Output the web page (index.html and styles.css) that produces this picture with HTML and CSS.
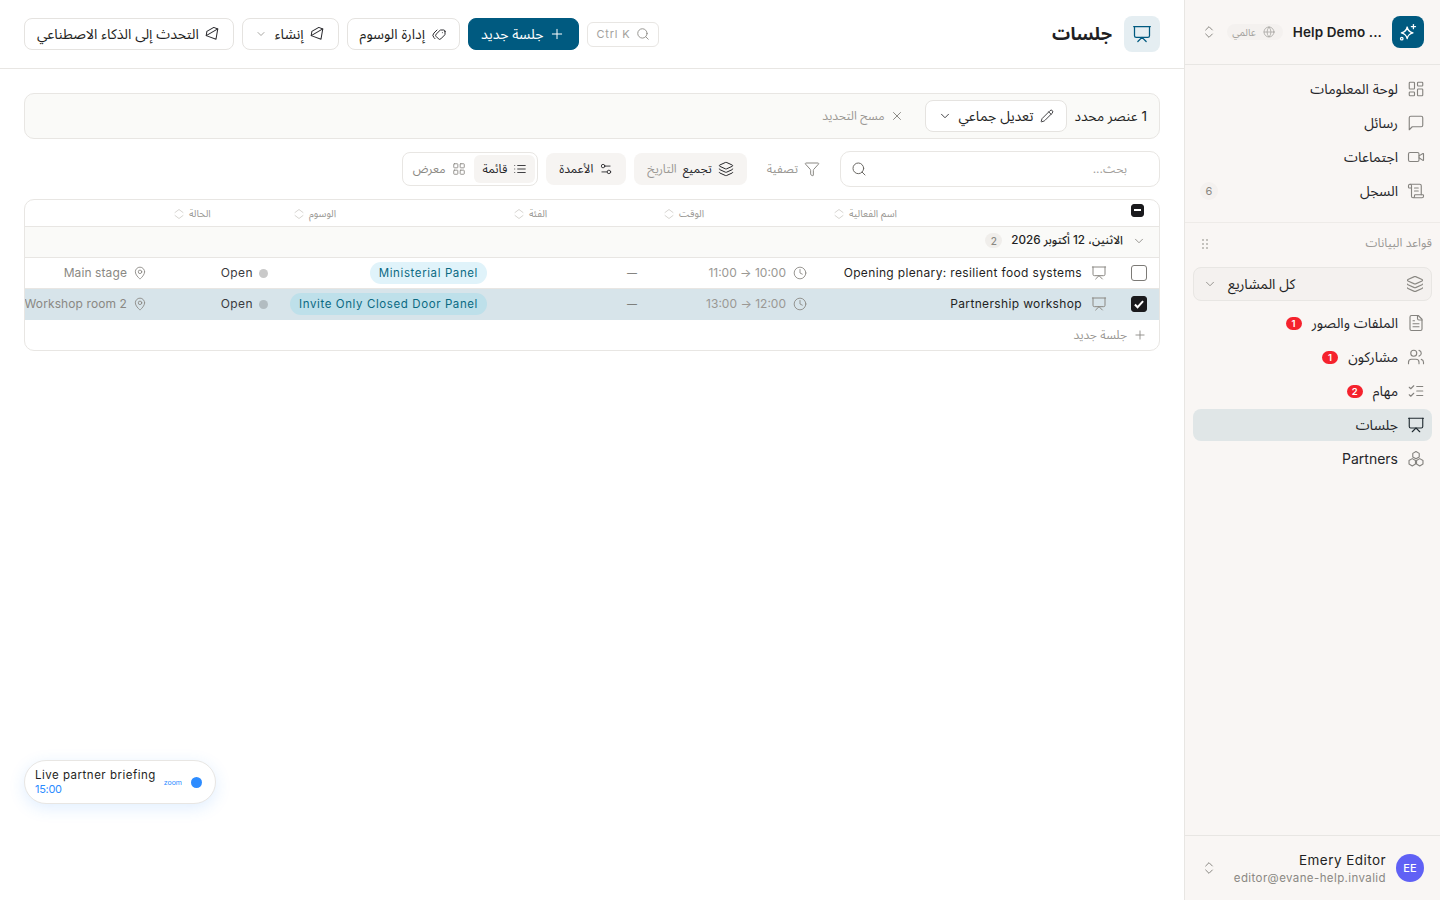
FILE: index.html
```html
<!DOCTYPE html>
<html lang="ar" dir="rtl">
<head>
<meta charset="UTF-8">
<title>جلسات</title>
<link rel="stylesheet" href="styles.css">
</head>
<body>
<svg class="sprite" xmlns="http://www.w3.org/2000/svg">
  <symbol id="i-present" viewBox="0 0 24 24"><path d="M2 3h20"/><path d="M21 3v11a2 2 0 0 1-2 2H5a2 2 0 0 1-2-2V3"/><path d="m7 21 5-5 5 5"/></symbol>
  <symbol id="i-dash" viewBox="0 0 24 24"><rect x="3" y="3" width="7" height="9" rx="1"/><rect x="14" y="3" width="7" height="5" rx="1"/><rect x="14" y="12" width="7" height="9" rx="1"/><rect x="3" y="16" width="7" height="5" rx="1"/></symbol>
  <symbol id="i-msg" viewBox="0 0 24 24"><path d="M21 15a2 2 0 0 1-2 2H7l-4 4V5a2 2 0 0 1 2-2h14a2 2 0 0 1 2 2z"/></symbol>
  <symbol id="i-video" viewBox="0 0 24 24"><path d="m16 13 5.223 3.482a.5.5 0 0 0 .777-.416V7.870a.5.5 0 0 0-.752-.432L16 10.500"/><rect x="2" y="6" width="14" height="12" rx="2"/></symbol>
  <symbol id="i-scroll" viewBox="0 0 24 24"><path d="M15 12h-5"/><path d="M15 8h-5"/><path d="M19 17V5a2 2 0 0 0-2-2H4"/><path d="M8 21h12a2 2 0 0 0 2-2v-1a1 1 0 0 0-1-1H11a1 1 0 0 0-1 1v1a2 2 0 1 1-4 0V5a2 2 0 1 0-4 0v2a1 1 0 0 0 1 1h3"/></symbol>
  <symbol id="i-layers" viewBox="0 0 24 24"><path d="M12.830 2.180a2 2 0 0 0-1.660 0L2.600 6.080a1 1 0 0 0 0 1.830l8.580 3.910a2 2 0 0 0 1.660 0l8.580-3.900a1 1 0 0 0 0-1.830z"/><path d="M2 12a1 1 0 0 0 .58.91l8.600 3.910a2 2 0 0 0 1.650 0l8.580-3.900A1 1 0 0 0 22 12"/><path d="M2 17a1 1 0 0 0 .58.91l8.600 3.910a2 2 0 0 0 1.650 0l8.580-3.900A1 1 0 0 0 22 17"/></symbol>
  <symbol id="i-file" viewBox="0 0 24 24"><path d="M15 2H6a2 2 0 0 0-2 2v16a2 2 0 0 0 2 2h12a2 2 0 0 0 2-2V7Z"/><path d="M14 2v4a2 2 0 0 0 2 2h4"/><path d="M10 9H8"/><path d="M16 13H8"/><path d="M16 17H8"/></symbol>
  <symbol id="i-users" viewBox="0 0 24 24"><path d="M16 21v-2a4 4 0 0 0-4-4H6a4 4 0 0 0-4 4v2"/><circle cx="9" cy="7" r="4"/><path d="M22 21v-2a4 4 0 0 0-3-3.870"/><path d="M16 3.130a4 4 0 0 1 0 7.750"/></symbol>
  <symbol id="i-checks" viewBox="0 0 24 24"><path d="m3 17 2 2 4-4"/><path d="m3 7 2 2 4-4"/><path d="M13 6h8"/><path d="M13 12h8"/><path d="M13 18h8"/></symbol>
  <symbol id="i-hex" viewBox="0 0 24 24"><path d="M12 2l4.300 2.500v4.800L12 11.800 7.700 9.300V4.500z"/><path d="M7 11.500l4.300 2.500v4.800L7 21.300l-4.300-2.500V14z"/><path d="M17 11.500l4.300 2.500v4.800L17 21.300l-4.300-2.500V14z"/></symbol>
  <symbol id="i-updown" viewBox="0 0 24 24"><path d="m7 15 5 5 5-5"/><path d="m7 9 5-5 5 5"/></symbol>
  <symbol id="i-sort" viewBox="0 0 24 24"><path d="M4 15l8 6 8-6"/><path d="M4 9l8-6 8 6"/></symbol>
  <symbol id="i-globe" viewBox="0 0 24 24"><circle cx="12" cy="12" r="10"/><path d="M12 2a14.500 14.500 0 0 0 0 20 14.500 14.500 0 0 0 0-20"/><path d="M2 12h20"/></symbol>
  <symbol id="i-spark" viewBox="0 0 24 24"><path d="M11 6c.9 4.400 2.400 6 7 7-4.600 1-6.100 2.600-7 7-.9-4.400-2.400-6-7-7 4.600-1 6.100-2.600 7-7z"/><path d="M18.500 3v5"/><path d="M16 5.500h5"/><circle cx="4.500" cy="20" r="1.500"/></symbol>
  <symbol id="i-down" viewBox="0 0 24 24"><path d="m6 9 6 6 6-6"/></symbol>
  <symbol id="i-search" viewBox="0 0 24 24"><circle cx="11" cy="11" r="8"/><path d="m21 21-4.300-4.300"/></symbol>
  <symbol id="i-plus" viewBox="0 0 24 24"><path d="M5 12h14"/><path d="M12 5v14"/></symbol>
  <symbol id="i-tags" viewBox="0 0 24 24"><path d="M3 8v4.172a2 2 0 0 0 .586 1.414l5.710 5.710a2.410 2.410 0 0 0 3.408 0l3.592-3.592a2.410 2.410 0 0 0 0-3.408l-5.710-5.710a2 2 0 0 0-1.414-.586H5a2 2 0 0 0-2 2z"/><path d="M18 19l1.592-1.592a4.820 4.820 0 0 0 0-6.816L15 6"/><path d="M7 10h-.01"/></symbol>
  <symbol id="i-gem" viewBox="0 0 24 24"><g transform="rotate(-30 12 12)"><path d="M6 4h12l4 5-10 12L2 9Z"/><path d="M2 9h20"/></g></symbol>
  <symbol id="i-pencil" viewBox="0 0 24 24"><path d="M21.174 6.812a1 1 0 0 0-3.986-3.987L3.842 16.174a2 2 0 0 0-.5.830l-1.321 4.352a.5.5 0 0 0 .623.622l4.353-1.320a2 2 0 0 0 .830-.497z"/><path d="m15 5 4 4"/></symbol>
  <symbol id="i-x" viewBox="0 0 24 24"><path d="M18 6 6 18"/><path d="m6 6 12 12"/></symbol>
  <symbol id="i-funnel" viewBox="0 0 24 24"><path d="M10 20a1 1 0 0 0 .553.895l2 1A1 1 0 0 0 14 21v-7a2 2 0 0 1 .517-1.341L21.740 4.670A1 1 0 0 0 21 3H3a1 1 0 0 0-.742 1.670l7.225 7.989A2 2 0 0 1 10 14z"/></symbol>
  <symbol id="i-cols" viewBox="0 0 24 24"><path d="M14 17H5"/><path d="M19 7h-9"/><circle cx="17" cy="17" r="3"/><circle cx="7" cy="7" r="3"/></symbol>
  <symbol id="i-list" viewBox="0 0 24 24"><path d="M3 12h.01"/><path d="M3 18h.01"/><path d="M3 6h.01"/><path d="M8 12h13"/><path d="M8 18h13"/><path d="M8 6h13"/></symbol>
  <symbol id="i-grid" viewBox="0 0 24 24"><rect x="3" y="3" width="7" height="7" rx="1"/><rect x="14" y="3" width="7" height="7" rx="1"/><rect x="14" y="14" width="7" height="7" rx="1"/><rect x="3" y="14" width="7" height="7" rx="1"/></symbol>
  <symbol id="i-clock" viewBox="0 0 24 24"><circle cx="12" cy="12" r="10"/><polyline points="12 6 12 12 16 14"/></symbol>
  <symbol id="i-pin" viewBox="0 0 24 24"><path d="M20 10c0 4.993-5.539 10.193-7.399 11.799a1 1 0 0 1-1.202 0C9.539 20.193 4 14.993 4 10a8 8 0 0 1 16 0"/><circle cx="12" cy="10" r="3"/></symbol>
</svg>

<div class="app">
  <aside class="sidebar">
    <div class="workspace">
      <span class="logo"><svg class="ic ic-20"><use href="#i-spark"/></svg></span>
      <b class="ws-name" dir="ltr">Help Demo ...</b>
      <span class="ws-tag"><svg class="ic ic-12"><use href="#i-globe"/></svg>عالمي</span>
      <svg class="ic ic-16 updown"><use href="#i-updown"/></svg>
    </div>
    <nav class="nav nav-top">
      <a class="nav-item"><svg class="ic"><use href="#i-dash"/></svg>لوحة المعلومات</a>
      <a class="nav-item"><svg class="ic"><use href="#i-msg"/></svg>رسائل</a>
      <a class="nav-item"><svg class="ic"><use href="#i-video"/></svg>اجتماعات</a>
      <a class="nav-item"><svg class="ic"><use href="#i-scroll"/></svg>السجل<span class="count">6</span></a>
    </nav>
    <div class="section-head">
      <span>قواعد البيانات</span>
      <span class="grip"><i></i><i></i><i></i><i></i><i></i><i></i></span>
    </div>
    <div class="project-select">
      <svg class="ic ic-18"><use href="#i-layers"/></svg>
      <span class="project-name">كل المشاريع</span>
      <svg class="ic ic-14"><use href="#i-down"/></svg>
    </div>
    <nav class="nav">
      <a class="nav-item"><svg class="ic"><use href="#i-file"/></svg>الملفات والصور<span class="badge">1</span></a>
      <a class="nav-item"><svg class="ic"><use href="#i-users"/></svg>مشاركون<span class="badge">1</span></a>
      <a class="nav-item"><svg class="ic"><use href="#i-checks"/></svg>مهام<span class="badge">2</span></a>
      <a class="nav-item active"><svg class="ic"><use href="#i-present"/></svg>جلسات</a>
      <a class="nav-item"><svg class="ic"><use href="#i-hex"/></svg><span class="txt">Partners</span></a>
    </nav>
    <div class="user">
      <span class="avatar">EE</span>
      <div class="user-info">
        <b>Emery Editor</b>
        <small>editor@evane-help.invalid</small>
      </div>
      <svg class="ic ic-16 updown"><use href="#i-updown"/></svg>
    </div>
  </aside>

  <main class="main">
    <header class="topbar">
      <div class="title">
        <span class="title-icon"><svg class="ic ic-20"><use href="#i-present"/></svg></span>
        <h1>جلسات</h1>
      </div>
      <div class="actions">
        <span class="kbd"><svg class="ic ic-14"><use href="#i-search"/></svg><span dir="ltr">Ctrl K</span></span>
        <button class="btn primary"><svg class="ic ic-16"><use href="#i-plus"/></svg>جلسة جديد</button>
        <button class="btn"><svg class="ic ic-16 flip"><use href="#i-tags"/></svg>إدارة الوسوم</button>
        <button class="btn"><svg class="ic ic-16"><use href="#i-gem"/></svg>إنشاء<svg class="ic ic-12 mute"><use href="#i-down"/></svg></button>
        <button class="btn"><svg class="ic ic-16"><use href="#i-gem"/></svg>التحدث إلى الذكاء الاصطناعي</button>
      </div>
    </header>

    <section class="content">
      <div class="selection">
        <span>1 عنصر محدد</span>
        <button class="btn small"><svg class="ic ic-14"><use href="#i-pencil"/></svg>تعديل جماعي<svg class="ic ic-14"><use href="#i-down"/></svg></button>
        <span class="clear"><svg class="ic ic-14"><use href="#i-x"/></svg>مسح التحديد</span>
      </div>

      <div class="toolbar">
        <div class="search">
          <span>بحث...</span>
          <svg class="ic ic-16"><use href="#i-search"/></svg>
        </div>
        <span class="tool plain"><svg class="ic ic-16"><use href="#i-funnel"/></svg>تصفية</span>
        <span class="tool"><svg class="ic ic-16 dark"><use href="#i-layers"/></svg><b>تجميع</b> <em>التاريخ</em></span>
        <span class="tool"><svg class="ic ic-14 dark"><use href="#i-cols"/></svg><b>الأعمدة</b></span>
        <div class="views">
          <span class="view on"><svg class="ic ic-14 dark"><use href="#i-list"/></svg>قائمة</span>
          <span class="view"><svg class="ic ic-14"><use href="#i-grid"/></svg>معرض</span>
        </div>
      </div>

      <div class="table">
        <div class="row head">
          <div class="cell"><span class="check minus"></span></div>
          <div class="cell">اسم الفعالية<svg class="ic ic-12"><use href="#i-sort"/></svg></div>
          <div class="cell">الوقت<svg class="ic ic-12"><use href="#i-sort"/></svg></div>
          <div class="cell">الفئة<svg class="ic ic-12"><use href="#i-sort"/></svg></div>
          <div class="cell">الوسوم<svg class="ic ic-12"><use href="#i-sort"/></svg></div>
          <div class="cell">الحالة<svg class="ic ic-12"><use href="#i-sort"/></svg></div>
          <div class="cell"></div>
        </div>
        <div class="group">
          <svg class="ic ic-14"><use href="#i-down"/></svg>
          <span>الاثنين، 12 أكتوبر 2026</span>
          <span class="count">2</span>
        </div>
        <div class="row">
          <div class="cell"><span class="check"></span></div>
          <div class="cell name"><svg class="ic ic-16"><use href="#i-present"/></svg><span class="txt">Opening plenary: resilient food systems</span></div>
          <div class="cell time"><svg class="ic ic-14"><use href="#i-clock"/></svg><span class="txt">10:00 → 11:00</span></div>
          <div class="cell dash">—</div>
          <div class="cell"><span class="tag">Ministerial Panel</span></div>
          <div class="cell status"><i></i><span class="txt">Open</span></div>
          <div class="cell place"><svg class="ic ic-14"><use href="#i-pin"/></svg><span class="txt">Main stage</span></div>
        </div>
        <div class="row selected">
          <div class="cell"><span class="check on"><svg viewBox="0 0 24 24"><path d="M5 13l4.500 4.500L19 7"/></svg></span></div>
          <div class="cell name"><svg class="ic ic-16"><use href="#i-present"/></svg><span class="txt">Partnership workshop</span></div>
          <div class="cell time"><svg class="ic ic-14"><use href="#i-clock"/></svg><span class="txt">12:00 → 13:00</span></div>
          <div class="cell dash">—</div>
          <div class="cell"><span class="tag">Invite Only Closed Door Panel</span></div>
          <div class="cell status"><i></i><span class="txt">Open</span></div>
          <div class="cell place"><svg class="ic ic-14"><use href="#i-pin"/></svg><span class="txt">Workshop room 2</span></div>
        </div>
        <div class="add-row"><svg class="ic ic-14"><use href="#i-plus"/></svg>جلسة جديد</div>
      </div>
    </section>

    <div class="live" dir="ltr">
      <div class="live-text">
        <span>Live partner briefing</span>
        <small>15:00</small>
      </div>
      <span class="zoom">zoom</span>
      <i class="live-dot"></i>
    </div>
  </main>
</div>
</body>
</html>
```

FILE: styles.css
```css
* { box-sizing: border-box; }
html, body { margin: 0; height: 100%; }
body { font-family: Inter, "Noto Sans Arabic", "Noto Naskh Arabic", "Noto Sans", sans-serif; font-size: 13px; color: #1f1f23; background: #fff; overflow: hidden; }
.sprite { display: none; }
button { font: inherit; color: inherit; cursor: pointer; }
b { font-weight: 600; }
.txt { margin-bottom: 2px; }

.ic { width: 16px; height: 16px; flex: none; fill: none; stroke: currentColor; stroke-width: 1.5; stroke-linecap: round; stroke-linejoin: round; color: #8a8883; }
.ic-12 { width: 12px; height: 12px; }
.ic-14 { width: 14px; height: 14px; }
.ic-16 { width: 16px; height: 16px; }
.ic-18 { width: 18px; height: 18px; }
.ic-20 { width: 20px; height: 20px; }
.flip { transform: scaleX(-1); }
.dark { color: #27272a; }

.app { display: flex; height: 900px; }

/* sidebar */
.sidebar { width: 256px; flex: none; display: flex; flex-direction: column; background: #f9f6f4; border-left: 1px solid #e8e6e3; }
.workspace { height: 65px; flex: none; display: flex; align-items: center; padding: 0 16px; border-bottom: 1px solid #e8e6e3; }
.logo { width: 32px; height: 32px; flex: none; border-radius: 8px; background: #005a80; display: flex; align-items: center; justify-content: center; }
.logo .ic { color: #fff; }
.ws-name { margin-right: 10px; font-size: 13.500px; letter-spacing: .1px; white-space: nowrap; }
.ws-tag { margin-right: 10px; height: 16px; padding: 0 8px 0 5px; display: flex; align-items: center; gap: 7px; font-size: 10px; color: #a3a19d; background: #f4f1ef; border-radius: 8px; }
.ws-tag .ic { color: #a3a19d; }
.updown { margin-right: auto; }

.nav { display: flex; flex-direction: column; gap: 2px; padding: 0 8px; }
.nav-top { padding-top: 8px; padding-bottom: 15px; border-bottom: 1px solid #eeebe8; }
.nav-item { height: 32px; display: flex; align-items: center; gap: 9px; padding: 0 7px; font-size: 14px; border-radius: 8px; color: #26262a; }
.nav-item .ic { width: 18px; height: 18px; color: #85837f; }
.nav-item.active { background: #e0e6e7; }
.nav-item.active .ic { color: #1f2a30; }
.count { min-width: 18px; height: 18px; padding: 0 5px; display: inline-flex; align-items: center; justify-content: center; font-size: 10px; color: #8a8883; background: #f4f1ef; border-radius: 9px; }
.nav-item .count { margin-right: auto; font-size: 11px; }
.badge { min-width: 16px; height: 13px; margin-right: 1px; display: inline-flex; align-items: center; justify-content: center; font-size: 9.500px; font-weight: 600; color: #fff; background: #f5222d; border-radius: 7px; }

.section-head { height: 41px; display: flex; align-items: center; justify-content: space-between; padding: 0 8px 0 17px; font-size: 12px; color: #9a9894; }
.grip { display: grid; grid-template-columns: 2px 2px; gap: 2px; }
.grip i { width: 2px; height: 2px; background: #c4c2bd; }
.project-select { height: 34px; margin: 3px 8px 6px; padding: 0 7px 0 9px; display: flex; align-items: center; gap: 11px; font-size: 14px; background: #f4f1ef; border: 1px solid #e8e6e3; border-radius: 8px; }
.project-name { margin-right: auto; }

.user { margin-top: auto; height: 65px; flex: none; display: flex; align-items: center; padding: 0 16px; border-top: 1px solid #e8e6e3; }
.avatar { width: 28px; height: 28px; flex: none; border-radius: 50%; background: #6061f5; color: #fff; font-size: 11px; font-weight: 500; display: flex; align-items: center; justify-content: center; }
.user-info { margin-right: 10px; display: flex; flex-direction: column; gap: 2px; }
.user-info b { font-size: 13.500px; font-weight: 400; line-height: 18px; letter-spacing: .45px; }
.user-info small { font-size: 11.500px; color: #8a8883; line-height: 15px; letter-spacing: .4px; }

/* main */
.main { flex: 1; min-width: 0; position: relative; }
.topbar { height: 69px; padding: 0 24px; display: flex; align-items: center; justify-content: space-between; border-bottom: 1px solid #e8e6e3; }
.title { display: flex; align-items: center; gap: 12px; }
.title-icon { width: 36px; height: 36px; border-radius: 8px; background: #e5eef2; display: flex; align-items: center; justify-content: center; }
.title-icon .ic { color: #005a80; }
h1 { margin: 0; font-size: 18px; font-weight: 700; }
.actions { display: flex; align-items: center; gap: 8px; }
.kbd { height: 25px; padding: 0 8px; display: flex; align-items: center; gap: 6px; font-size: 11px; color: #a3a19d; border: 1px solid #e8e6e3; border-radius: 6px; letter-spacing: .8px; }
.btn { height: 32px; padding: 0 12px; display: flex; align-items: center; gap: 6px; font-size: 14px; background: #fff; border: 1px solid #e5e3e0; border-radius: 8px; white-space: nowrap; }
.btn .ic { color: #2a2a2e; }
.btn .mute { color: #8a8883; margin-right: 2px; }
.btn.primary { background: #005a80; border-color: #005a80; color: #fff; padding: 0 13px 0 12px; }
.btn.primary .ic { color: #fff; }

.content { padding: 24px 24px 0; }
.selection { height: 46px; padding: 0 12px; display: flex; align-items: center; gap: 8px; background: #fafaf8; border: 1px solid #e8e6e3; border-radius: 10px; font-size: 13.600px; }
.clear { margin-right: 13px; display: flex; align-items: center; gap: 6px; font-size: 12px; color: #9a9894; }
.clear .ic { color: #7c7a76; }

.toolbar { margin-top: 12px; display: flex; align-items: center; }
.search { width: 320px; height: 36px; padding: 0 32px 0 10px; display: flex; align-items: center; justify-content: space-between; font-size: 12px; color: #a3a19d; border: 1px solid #e8e6e3; border-radius: 10px; }
.search .ic { color: #6a6864; }
.tool { height: 32px; padding: 0 13px; margin-right: 8px; display: flex; align-items: center; gap: 6px; font-size: 12px; background: #f6f4f2; border-radius: 8px; }
.tool b { font-weight: 400; color: #26262a; }
.tool em { font-style: normal; color: #9a9894; }
.tool.plain { background: none; color: #9a9894; margin-right: 20px; padding: 0; margin-left: 12px; }
.views { margin-right: 8px; height: 34px; padding: 2px; display: flex; border: 1px solid #e8e6e3; border-radius: 8px; }
.view { padding: 0 8px; display: flex; align-items: center; gap: 7px; font-size: 12px; color: #8a8883; border-radius: 6px; }
.view.on { gap: 6px; background: #f6f4f2; color: #26262a; }

.table { margin-top: 12px; border: 1px solid #e8e6e3; border-radius: 10px; overflow: hidden; }
.row { display: grid; grid-template-columns: 39px 295px 170px 150px 220px 120px 1fr; height: 31px; border-bottom: 1px solid #e8e6e3; }
.row .cell { display: flex; align-items: center; gap: 6px; padding-right: 18px; font-size: 12px; line-height: 13px; white-space: nowrap; min-width: 0; }
.row .cell:first-child { padding-right: 12px; }
.row .cell.name { padding-right: 13px; gap: 9px; font-weight: 400; letter-spacing: .35px; }
.row.head { height: 27px; }
.row.head .cell { padding: 1px 0 0 8px; justify-content: flex-end; font-size: 10px; color: #9a9894; gap: 4px; }
.row.head .cell:first-child { padding: 0 15px 0 0; justify-content: flex-start; }
.row.head .ic { color: #c9c7c2; }
.row.selected { background: #d7e4ea; border-bottom-color: transparent; }

.check { width: 16px; height: 16px; display: flex; align-items: center; justify-content: center; background: #fff; border: 1px solid #7c7a76; border-radius: 3px; }
.check.on, .check.minus { background: #1a1a1d; border-color: #1a1a1d; }
.check svg { width: 14px; height: 14px; fill: none; stroke: #fff; stroke-width: 3.500; }
.check.minus { width: 13px; height: 13px; margin-top: -6px; }
.check.minus::after { content: ""; width: 7px; height: 2px; background: #fff; }

.group { height: 31px; padding: 0 13px 3px; display: flex; align-items: center; gap: 9px; font-size: 11.700px; font-weight: 500; background: #fafaf8; border-bottom: 1px solid #e8e6e3; }
.group .count { background: #f0eeeb; min-width: 17px; height: 15px; padding: 0; }

.time { color: #9a9894; }
.row .time { gap: 7px; }
.dash { color: #6a6864; }
.row .dash { font-size: 10px; }
.tag { height: 22px; padding: 0 9px; display: inline-flex; align-items: center; font-size: 11.500px; font-weight: 400; letter-spacing: .6px; color: #0b6a83; background: #e0f3fa; border-radius: 11px; }
.selected .tag { background: #bee0ea; }
.row .status { gap: 6px; padding-right: 17px; font-weight: 400; letter-spacing: .4px; color: #3a3a3e; }
.status i { width: 9px; height: 9px; border-radius: 50%; background: #c9c9c9; }
.selected .status i { background: #b2bcc1; }
.place { color: #8a8883; letter-spacing: .1px; }
.add-row { height: 30px; padding: 0 12px; display: flex; align-items: center; gap: 6px; font-size: 12px; color: #9a9894; }

.live { position: absolute; left: 24px; bottom: 96px; width: 192px; height: 44px; padding: 0 13px 0 10px; display: flex; align-items: center; background: #fff; border: 1px solid #e8e6e3; border-radius: 22px; box-shadow: 0 4px 16px rgba(45,140,255,.15); }
.live-text { display: flex; flex-direction: column; }
.live-text span { font-size: 11.500px; font-weight: 400; line-height: 15px; letter-spacing: .5px; }
.live-text small { font-size: 11px; line-height: 13px; letter-spacing: -.3px; color: #2d8cff; }
.zoom { margin-left: auto; font-size: 7px; color: #2d8cff; }
.live-dot { margin-left: 9px; width: 11px; height: 11px; border-radius: 50%; background: #2d8cff; }
```
